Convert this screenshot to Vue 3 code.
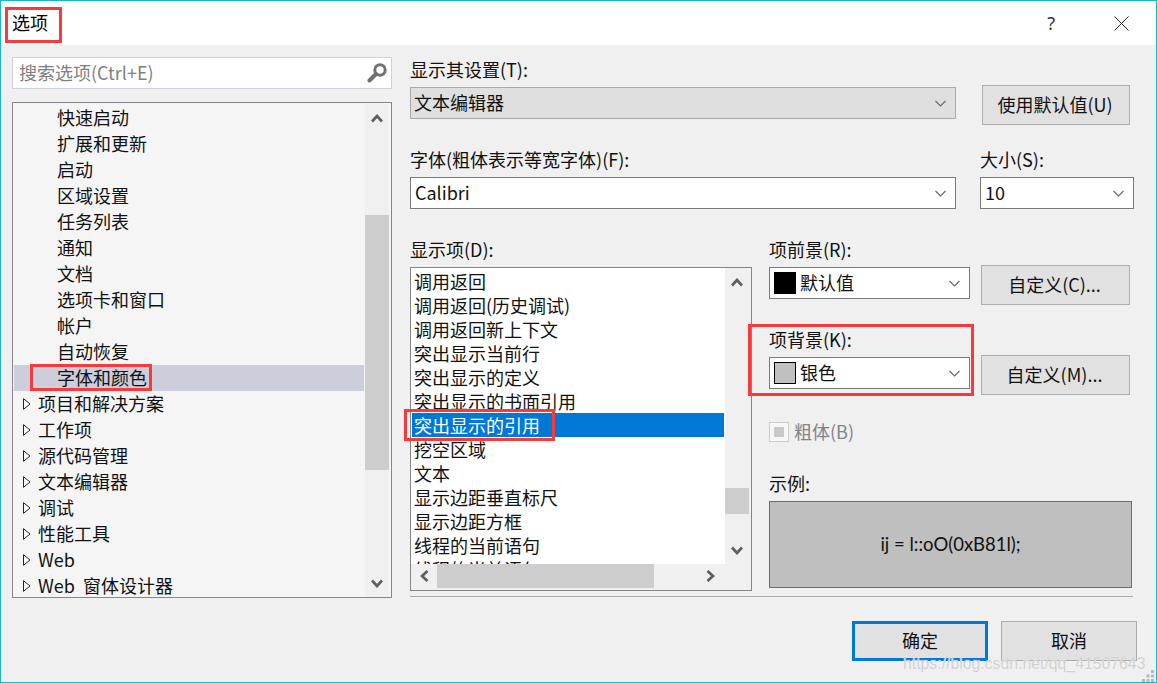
<template>
  <div class="window">
    <header class="titlebar">
      <span class="title">选项</span>
      <span class="help">?</span>
      <svg class="close" width="15" height="15" viewBox="0 0 15 15">
        <path d="M0.5 0.5 L14.5 14.5 M14.5 0.5 L0.5 14.5" stroke="#222" stroke-width="1" fill="none" />
      </svg>
    </header>

    <div class="body">
      <aside class="left">
        <div class="search">
          <span>搜索选项(Ctrl+E)</span>
          <svg width="20" height="20" viewBox="0 0 20 20">
            <circle cx="13" cy="7" r="5.2" fill="none" stroke="#717171" stroke-width="3" />
            <path d="M9 11 L2.5 17.5" stroke="#717171" stroke-width="4" stroke-linecap="round" />
          </svg>
        </div>

        <div class="tree">
          <ul class="tree-rows">
            <li
              v-for="node in treeNodes"
              :key="node.label"
              class="tree-row"
              :class="{ parent: node.parent, current: node.label === currentNode }"
            >
              <svg v-if="node.parent" width="8" height="12" viewBox="0 0 8 12">
                <path d="M0.5 0.7 L7 6 L0.5 11.3 Z" fill="#fff" stroke="#222" stroke-width="1" />
              </svg>
              <span>{{ node.label }}</span>
            </li>
          </ul>
          <div class="vscroll tree-scroll">
            <div class="arrow tall">
              <svg width="12" height="9" viewBox="0 0 12 9"><path d="M1 7.5 L6 2 L11 7.5" /></svg>
            </div>
            <div class="track"><div class="thumb tree-thumb"></div></div>
            <div class="arrow tall">
              <svg width="12" height="9" viewBox="0 0 12 9"><path d="M1 1.500 L6 7 L11 1.500" /></svg>
            </div>
          </div>
        </div>
      </aside>

      <main class="right">
        <div class="row-top">
          <div class="field wide">
            <label>显示其设置(T):</label>
            <div class="select disabled">
              <span>文本编辑器</span>
              <svg class="caret" width="11" height="7" viewBox="0 0 11 7"><path d="M0.5 1 L5.5 6 L10.5 1" /></svg>
            </div>
          </div>
          <button class="btn default-btn">使用默认值(U)</button>
        </div>

        <div class="row-font">
          <div class="field wide">
            <label>字体(粗体表示等宽字体)(F):</label>
            <div class="select">
              <span class="latin">Calibri</span>
              <svg class="caret" width="11" height="7" viewBox="0 0 11 7"><path d="M0.5 1 L5.5 6 L10.5 1" /></svg>
            </div>
          </div>
          <div class="field size">
            <label>大小(S):</label>
            <div class="select">
              <span class="latin">10</span>
              <svg class="caret" width="11" height="7" viewBox="0 0 11 7"><path d="M0.5 1 L5.5 6 L10.5 1" /></svg>
            </div>
          </div>
        </div>

        <div class="row-main">
          <div class="field">
            <label>显示项(D):</label>
            <div class="listbox">
              <ul class="list-rows">
                <li
                  v-for="item in displayItems"
                  :key="item"
                  class="list-row"
                  :class="{ selected: item === selectedItem }"
                >{{ item }}</li>
              </ul>
              <div class="vscroll">
                <div class="arrow tall">
                  <svg width="12" height="9" viewBox="0 0 12 9"><path d="M1 7.5 L6 2 L11 7.5" /></svg>
                </div>
                <div class="track"><div class="thumb list-thumb"></div></div>
                <div class="arrow tall">
                  <svg width="12" height="9" viewBox="0 0 12 9"><path d="M1 1.500 L6 7 L11 1.500" /></svg>
                </div>
              </div>
              <div class="hscroll">
                <div class="arrow wide-arrow">
                  <svg width="9" height="12" viewBox="0 0 9 12"><path d="M7.5 1 L2 6 L7.5 11" /></svg>
                </div>
                <div class="hthumb"></div>
                <div class="arrow wide-arrow end">
                  <svg width="9" height="12" viewBox="0 0 9 12"><path d="M1.500 1 L7 6 L1.500 11" /></svg>
                </div>
              </div>
            </div>
          </div>

          <div class="options">
            <label>项前景(R):</label>
            <div class="color-row">
              <div class="select color">
                <i class="swatch black"></i>
                <span>默认值</span>
                <svg class="caret" width="11" height="7" viewBox="0 0 11 7"><path d="M0.5 1 L5.5 6 L10.5 1" /></svg>
              </div>
              <button class="btn custom">自定义(C)...</button>
            </div>

            <label class="second">项背景(K):</label>
            <div class="color-row">
              <div class="select color">
                <i class="swatch silver"></i>
                <span>银色</span>
                <svg class="caret" width="11" height="7" viewBox="0 0 11 7"><path d="M0.5 1 L5.5 6 L10.5 1" /></svg>
              </div>
              <button class="btn custom">自定义(M)...</button>
            </div>

            <div class="bold-row">
              <span class="check"><i></i></span>
              <span class="bold-text">粗体(B)</span>
            </div>

            <label class="sample-label">示例:</label>
            <div class="sample">ij = l::oO(0xB81l);</div>
          </div>
        </div>

        <div class="divider"></div>

        <footer class="actions">
          <button class="btn action primary">确定</button>
          <button class="btn action">取消</button>
        </footer>
      </main>
    </div>

    <!-- annotations drawn over the dialog -->
    <div class="mark mark-title"></div>
    <div class="mark mark-tree"></div>
    <div class="mark mark-list"></div>
    <div class="mark mark-bg"></div>

    <div class="watermark">https://blog.csdn.net/qq_41507643</div>
    <svg class="grip" width="13" height="12" viewBox="0 0 13 12">
      <path d="M9 0h3v3H9zM4.500 4.500h3v3h-3zM9 4.500h3v3H9zM0 9h3v3H0zM4.500 9h3v3h-3zM9 9h3v3H9z" fill="#b9b9b9" />
    </svg>
  </div>
</template>

<script setup>
const currentNode = '字体和颜色'
const selectedItem = '突出显示的引用'

const childLabels = ['快速启动', '扩展和更新', '启动', '区域设置', '任务列表', '通知', '文档', '选项卡和窗口', '帐户', '自动恢复', '字体和颜色']
const parentLabels = ['项目和解决方案', '工作项', '源代码管理', '文本编辑器', '调试', '性能工具', 'Web', 'Web 窗体设计器']

const treeNodes = [
  ...childLabels.map((label) => ({ label, parent: false })),
  ...parentLabels.map((label) => ({ label, parent: true }))
]

const displayItems = [
  '调用返回',
  '调用返回(历史调试)',
  '调用返回新上下文',
  '突出显示当前行',
  '突出显示的定义',
  '突出显示的书面引用',
  '突出显示的引用',
  '挖空区域',
  '文本',
  '显示边距垂直标尺',
  '显示边距方框',
  '线程的当前语句',
  '线程的当前语句'
]
</script>

<style scoped>
.window {
  position: relative;
  width: 1157px;
  height: 683px;
  box-sizing: border-box;
  border: 1px solid #17b9c9;
  background: #f0f0f0;
  color: #111;
  font-family: "Noto Sans CJK SC", "Noto Sans", sans-serif;
  font-size: 18px;
  line-height: 24px;
  overflow: hidden;
}

ul {
  list-style: none;
  margin: 0;
  padding: 0;
}

label {
  display: block;
  height: 24px;
  line-height: 22px;
}

.titlebar {
  display: flex;
  align-items: center;
  height: 44px;
  background: #fff;
  padding-left: 11px;
}

.title {
  color: #000;
  margin-bottom: 2px;
}

.help {
  margin-left: auto;
  font-family: "Noto Sans", sans-serif;
  color: #333;
}

.close {
  margin-left: 59px;
  margin-right: 27px;
}

.body {
  display: flex;
  padding: 12px 0 0 11px;
}

.left {
  width: 380px;
  margin-right: 18px;
}

.search {
  display: flex;
  align-items: center;
  justify-content: space-between;
  height: 32px;
  box-sizing: border-box;
  padding: 0 4px 0 6px;
  background: #fff;
  border: 1px solid #cfd0e0;
  color: #7f7f7f;
}

.search span {
  margin-bottom: 2px;
}

.tree {
  display: flex;
  height: 496px;
  box-sizing: border-box;
  margin-top: 13px;
  padding: 2px 2px 0 1px;
  border: 1px solid #85858c;
  background: #f5f5f5;
}

.tree-rows {
  width: 350px;
  margin-right: 1px;
  overflow: hidden;
}

.tree-row {
  display: flex;
  align-items: center;
  height: 26px;
  padding-left: 43px;
  word-spacing: 4px;
}

.tree-row span {
  margin-bottom: 2px;
}

.tree-row.parent {
  padding-left: 9px;
  gap: 7px;
}

.tree-row.current {
  background: #cccedb;
}

.vscroll {
  display: flex;
  flex-direction: column;
  width: 24px;
  background: #f0f0f0;
}

.tree-scroll {
  margin-top: -1px;
}

.arrow {
  display: flex;
  align-items: center;
  justify-content: center;
  flex: none;
}

.arrow svg path {
  fill: none;
  stroke: #606060;
  stroke-width: 2.8;
}

.arrow.tall {
  height: 28px;
}

.track {
  flex: 1;
}

.thumb {
  background: #cdcdcd;
}

.tree-thumb {
  height: 255px;
  margin-top: 83px;
}

.list-thumb {
  height: 26px;
  margin-top: 192px;
}

.right {
  width: 727px;
  padding-top: 1px;
}

.field label {
  margin-bottom: 5px;
}

.row-top,
.row-font,
.row-main {
  display: flex;
  align-items: flex-start;
}

.wide {
  width: 546px;
}

.select {
  display: flex;
  align-items: center;
  height: 32px;
  box-sizing: border-box;
  padding: 0 9px 0 3px;
  background: #fff;
  border: 1px solid #7a7a7a;
}

.select span {
  margin-bottom: 2px;
}

.select.disabled {
  background: #dfdfdf;
  border-color: #a9a9a9;
}

.latin {
  padding-left: 1px;
}

.caret {
  margin-left: auto;
}

.caret path {
  fill: none;
  stroke: #6a6a6a;
  stroke-width: 1.2;
}

.btn {
  height: 40px;
  padding: 0 0 2px;
  box-sizing: border-box;
  background: #e1e1e1;
  border: 1px solid #adadad;
  color: #111;
  font: inherit;
}

.default-btn {
  width: 148px;
  margin: 27px 0 0 26px;
  padding-right: 2px;
}

.row-font {
  margin-top: 23px;
}

.size {
  width: 154px;
  margin-left: 24px;
}

.row-main {
  margin-top: 29px;
}

.listbox {
  display: grid;
  grid-template-columns: 314px 24px;
  grid-template-rows: 296px 24px;
  width: 342px;
  height: 324px;
  box-sizing: border-box;
  border: 1px solid #858585;
  background: #f0f0f0;
}

.list-rows {
  padding: 1px 1px 0 1px;
  background: #fff;
  overflow: hidden;
}

.list-row {
  height: 24px;
  padding-left: 2px;
  white-space: nowrap;
}

.list-row.selected {
  background: #0078d7;
  color: #fff;
}

.hscroll {
  grid-column: 1 / 3;
  display: flex;
  padding-left: 1px;
}

.arrow.wide-arrow {
  width: 25px;
}

.arrow.wide-arrow.end {
  margin-left: auto;
  width: 27px;
  margin-right: 25px;
}

.hthumb {
  width: 217px;
  background: #cdcdcd;
}

.options {
  width: 365px;
  margin-left: 17px;
}

.options label {
  margin-bottom: 5px;
}

.color-row {
  display: flex;
  align-items: flex-start;
  height: 40px;
  margin-top: -2px;
}

.select.color {
  width: 201px;
  margin-top: 2px;
  padding-left: 4px;
}

.swatch {
  flex: none;
  width: 22px;
  height: 22px;
  box-sizing: border-box;
  margin-right: 4px;
  border: 1px solid #000;
}

.swatch.black {
  background: #000;
}

.swatch.silver {
  background: #c0c0c0;
}

.custom {
  width: 149px;
  margin-left: 11px;
  padding-right: 2px;
}

.options .second {
  margin-top: 23px;
}

.bold-row {
  display: flex;
  align-items: center;
  height: 24px;
  margin-top: 25px;
  color: #838383;
}

.bold-text {
  margin-bottom: 2px;
}

.check {
  display: flex;
  align-items: center;
  justify-content: center;
  width: 20px;
  height: 20px;
  box-sizing: border-box;
  margin-right: 5px;
  border: 1px solid #cccccc;
  background: #f7f7f7;
}

.check i {
  width: 10px;
  height: 10px;
  background: #c8c8c8;
}

.options .sample-label {
  margin-top: 28px;
}

.sample {
  display: flex;
  align-items: center;
  justify-content: center;
  width: 363px;
  height: 87px;
  box-sizing: border-box;
  padding-bottom: 2px;
  border: 1px solid #6d6d6d;
  background: #bfbfbf;
  color: #111;
  font-family: Lato, "Noto Sans", sans-serif;
  font-size: 18.5px;
}

.divider {
  width: 723px;
  height: 1px;
  margin-top: 5px;
  background: #a8a8a8;
}

.actions {
  display: flex;
  justify-content: flex-end;
  gap: 13px;
  margin-top: 24px;
}

.action {
  width: 136px;
}

.action.primary {
  border: 3px solid #0078d7;
}

.mark {
  position: absolute;
  box-sizing: border-box;
  border: 3px solid #f83a3a;
}

.mark-title {
  left: 4px;
  top: 6px;
  width: 57px;
  height: 36px;
}

.mark-tree {
  left: 29px;
  top: 363px;
  width: 122px;
  height: 27px;
}

.mark-list {
  left: 403px;
  top: 408px;
  width: 151px;
  height: 32px;
}

.mark-bg {
  left: 747px;
  top: 323px;
  width: 226px;
  height: 72px;
}

.watermark {
  position: absolute;
  left: 902px;
  top: 651px;
  color: #d0d0d0;
  font-family: "Liberation Sans", sans-serif;
  font-size: 15.8px;
  text-shadow: 0 0 1px #fff;
  white-space: nowrap;
}

.grip {
  position: absolute;
  right: 1px;
  bottom: 0;
}
</style>
